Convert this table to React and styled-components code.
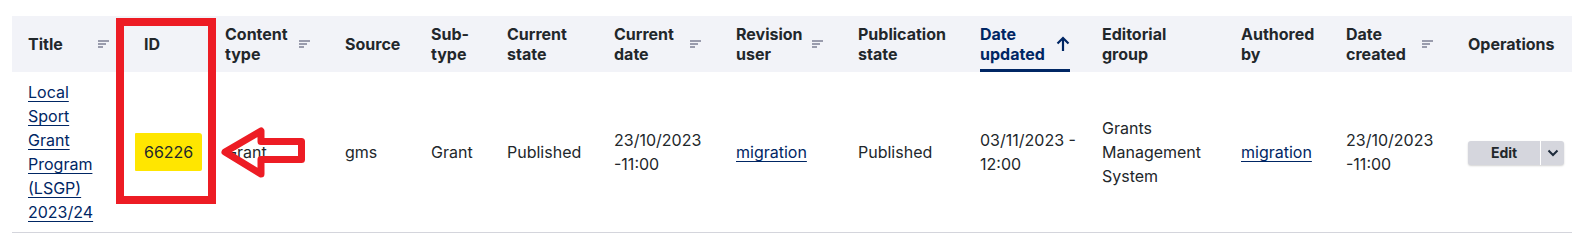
import styled, { createGlobalStyle } from "styled-components";

const GlobalStyle = createGlobalStyle`
  body {
    margin: 0;
    background: #ffffff;
    font-family: Inter, "Liberation Sans", sans-serif;
    color: #22272b;
  }
`;

const columns = [
    { key: "title", label: "Title", width: 116, sort: true },
    { key: "id", label: "ID", width: 81 },
    { key: "type", label: "Content type", width: 120, sort: true },
    { key: "source", label: "Source", width: 86 },
    { key: "subtype", label: "Sub-type", width: 76 },
    { key: "state", label: "Current state", width: 107 },
    { key: "date", label: "Current date", width: 122, sort: true },
    { key: "revuser", label: "Revision user", width: 122, sort: true },
    { key: "pubstate", label: "Publication state", width: 122 },
    { key: "updated", label: "Date updated", width: 122, active: true },
    { key: "group", label: "Editorial group", width: 139 },
    { key: "author", label: "Authored by", width: 105 },
    { key: "created", label: "Date created", width: 122, sort: true },
    { key: "ops", label: "Operations", width: 120 },
];

function SortIcon() {
    return (
        <svg width="16" height="16" viewBox="0 0 16 16">
            <rect x="2" y="4" width="11" height="2" fill="#9a9cad" />
            <rect x="2" y="7" width="8" height="2" fill="#9a9cad" />
            <rect x="2" y="10" width="5" height="2" fill="#9a9cad" />
        </svg>
    );
}

function ArrowUp() {
    return (
        <svg width="14" height="16" viewBox="0 0 14 16">
            <path d="M7 15V2M1.5 7.5L7 2l5.5 5.5" stroke="#002664" strokeWidth="2.2" fill="none" />
        </svg>
    );
}

function Chevron() {
    return (
        <svg width="12" height="8" viewBox="0 0 12 8">
            <path d="M1.5 1.5L6 6l4.5-4.5" stroke="#1d2a3a" strokeWidth="2" fill="none" />
        </svg>
    );
}

function DateText({ day, time }) {
    return (
        <>
            <NoWrap>{day}</NoWrap> <NoWrap>{time}</NoWrap>
        </>
    );
}

export default function App() {
    return (
        <Page>
            <GlobalStyle />
            <Table>
                <colgroup>
                    {columns.map(c => <Col key={c.key} $w={c.width} />)}
                </colgroup>
                <thead>
                    <tr>
                        {columns.map(c => (
                            <Th key={c.key}>
                                <ThInner $active={c.active}>
                                    <span>{c.label}</span>
                                    {c.sort && <SortIcon />}
                                    {c.active && <ArrowUp />}
                                </ThInner>
                            </Th>
                        ))}
                    </tr>
                </thead>
                <tbody>
                    <tr>
                        <Td $padRight={20}><Link href="#">Local Sport Grant Program (LSGP) 2023/24</Link></Td>
                        <Td><Mark>66226</Mark></Td>
                        <Td>Grant</Td>
                        <Td>gms</Td>
                        <Td>Grant</Td>
                        <Td>Published</Td>
                        <Td><DateText day="23/10/2023" time="-11:00" /></Td>
                        <Td><Link href="#">migration</Link></Td>
                        <Td>Published</Td>
                        <Td><DateText day="03/11/2023 -" time="12:00" /></Td>
                        <Td>Grants Management System</Td>
                        <Td><Link href="#">migration</Link></Td>
                        <Td><DateText day="23/10/2023" time="-11:00" /></Td>
                        <Td>
                            <SplitButton>
                                <EditPart>Edit</EditPart>
                                <TogglePart><Chevron /></TogglePart>
                            </SplitButton>
                        </Td>
                    </tr>
                </tbody>
            </Table>
            <Annotation width="1572" height="250" viewBox="0 0 1572 250">
                <rect x="120" y="22" width="92" height="178" fill="none" stroke="#ed1c24" strokeWidth="8" />
                <polygon
                    points="225,152 261,131 261,141.5 301.5,141.5 301.5,159.5 261,159.5 261,174"
                    fill="none"
                    stroke="#ed1c24"
                    strokeWidth="7"
                    strokeLinejoin="round"
                />
            </Annotation>
        </Page>
    );
}

const Page = styled.div`
    position: relative;
    padding: 16px 0 0 12px;
`

const Table = styled.table`
    width: 1560px;
    table-layout: fixed;
    border-collapse: collapse;
`

const Col = styled.col`
    width: ${p => p.$w}px;
`

const Th = styled.th`
    padding: 0 16px;
    height: 56px;
    background-color: #f2f3f8;
    text-align: left;
    vertical-align: middle;
    font-size: 16px;
    line-height: 20px;
    font-weight: 700;
    color: #22272b;
`

const ThInner = styled.div`
    display: flex;
    align-items: center;
    justify-content: space-between;
    height: 56px;
    color: ${p => p.$active ? "#002664" : "#22272b"};
    box-shadow: ${p => p.$active ? "inset 0 -3px 0 #002664" : "none"};
    svg {
        flex-shrink: 0;
    }
`

const Td = styled.td`
    padding: 8px ${p => p.$padRight || 16}px 8px 16px;
    vertical-align: middle;
    font-size: 16px;
    line-height: 24px;
    border-bottom: 1px solid #d4d5dc;
`

const Link = styled.a`
    color: #002664;
    text-decoration: underline;
    text-underline-offset: 3px;
`

const NoWrap = styled.span`
    white-space: nowrap;
`

const Mark = styled.span`
    background-color: #ffe600;
    padding: 9px 9px;
    margin: 0 -9px;
    border-radius: 1px 3px 2px 1px;
`

const SplitButton = styled.div`
    display: inline-flex;
    height: 24px;
    border-radius: 3px;
    overflow: hidden;
    background-color: #d5d6dd;
    box-shadow: 0 1px 2px rgba(0, 0, 0, 0.18);
    vertical-align: middle;
`

const EditPart = styled.span`
    display: flex;
    align-items: center;
    justify-content: center;
    width: 72px;
    font-size: 14px;
    font-weight: 700;
    color: #22272b;
    border-right: 1px solid #ffffff;
`

const TogglePart = styled.span`
    display: flex;
    align-items: center;
    justify-content: center;
    width: 23px;
`

const Annotation = styled.svg`
    position: absolute;
    top: 0;
    left: 0;
    pointer-events: none;
`
